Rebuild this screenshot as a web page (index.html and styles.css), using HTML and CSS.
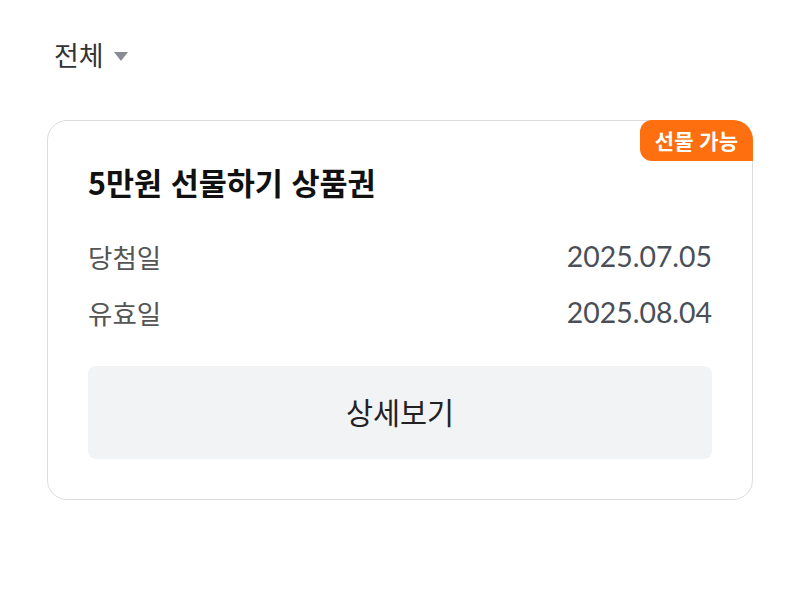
FILE: index.html
```html
<!DOCTYPE html>
<html lang="ko">
<head>
<meta charset="utf-8">
<link rel="stylesheet" href="styles.css">
</head>
<body>
<div class="page">
  <div class="filter">
    <span class="filter-label">전체</span>
    <span class="caret"></span>
  </div>
  <div class="card">
    <div class="badge">선물 가능</div>
    <h2 class="title">5만원 선물하기 상품권</h2>
    <div class="rows">
      <div class="row"><span class="label">당첨일</span><span class="value">2025.07.05</span></div>
      <div class="row"><span class="label">유효일</span><span class="value">2025.08.04</span></div>
    </div>
    <div class="button">상세보기</div>
  </div>
</div>
</body>
</html>
```

FILE: styles.css
```css
* { box-sizing: border-box; }
html, body { margin: 0; padding: 0; background: #fff; }
body {
  font-family: "Noto Sans CJK KR", "Noto Sans", sans-serif;
  color: #222;
}
.page {
  width: 800px;
  height: 589px;
  padding: 35px 48px 0 47px;
}
.filter {
  display: flex;
  align-items: center;
  gap: 10px;
  padding-left: 7px;
  height: 40px;
}
.filter-label {
  font-size: 27px;
  color: #333;
  line-height: 40px;
}
.caret {
  width: 0;
  height: 0;
  border-left: 7px solid transparent;
  border-right: 7px solid transparent;
  border-top: 9px solid #888c92;
  margin-top: 3px;
}
.card {
  position: relative;
  margin-top: 45px;
  width: 706px;
  height: 380px;
  border: 1px solid #dcdcdc;
  border-radius: 20px;
  padding: 41px 40px 0 40px;
}
.badge {
  position: absolute;
  top: -1px;
  right: -1px;
  height: 41px;
  padding: 0 15px;
  background: #fe6f0f;
  color: #fff;
  font-size: 21px;
  font-weight: 700;
  line-height: 41px;
  border-radius: 12px 20px 0 12px;
}
.title {
  margin: 0;
  font-size: 30.5px;
  font-weight: 700;
  line-height: 40px;
  color: #111;
}
.rows {
  margin-top: 34px;
  display: flex;
  flex-direction: column;
  gap: 16px;
}
.row {
  display: flex;
  justify-content: space-between;
  align-items: center;
  height: 40px;
}
.label {
  font-size: 26.5px;
  color: #555;
}
.value {
  font-family: "Lato", "Noto Sans", sans-serif;
  font-size: 28.4px;
  color: #4a4f57;
}
.button {
  margin-top: 34px;
  height: 93px;
  background: #f2f3f5;
  border-radius: 8px;
  display: flex;
  align-items: center;
  justify-content: center;
  font-size: 29.4px;
  color: #222;
  padding-bottom: 3px;
}
```
